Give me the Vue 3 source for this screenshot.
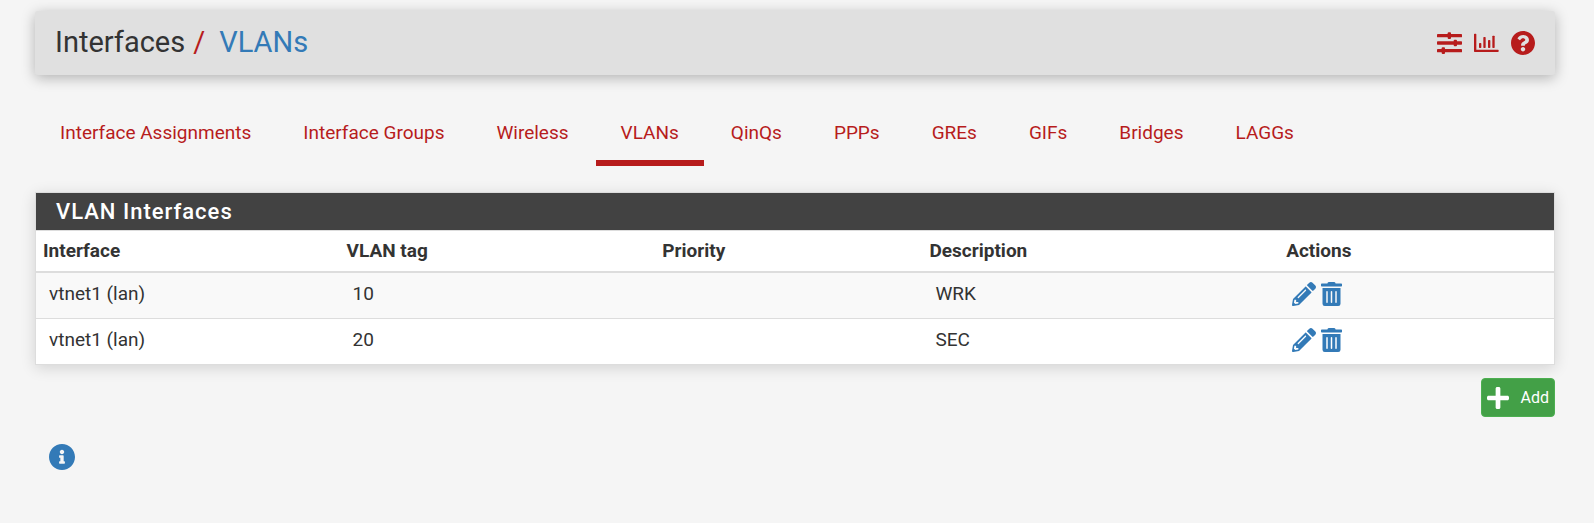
<script setup>
const tabs = [
  'Interface Assignments', 'Interface Groups', 'Wireless', 'VLANs', 'QinQs',
  'PPPs', 'GREs', 'GIFs', 'Bridges', 'LAGGs',
]
const activeTab = 'VLANs'
const vlans = [
  { iface: 'vtnet1 (lan)', tag: '10', priority: '', description: 'WRK' },
  { iface: 'vtnet1 (lan)', tag: '20', priority: '', description: 'SEC' },
]
</script>

<template>
  <div class="page">
    <header class="page-header">
      <h1>Interfaces<span class="slash">/</span><a href="#">VLANs</a></h1>
      <nav class="shortcuts" aria-label="Shortcuts">
        <a href="#" aria-label="Settings">
          <svg class="wide" viewBox="0 0 75 66">
            <rect y="6" width="75" height="10" rx="2" /><rect y="28" width="75" height="10" rx="2" /><rect y="51" width="75" height="10" rx="2" />
            <rect x="32" y="1" width="10" height="20" rx="3" /><rect x="50" y="23" width="10" height="20" rx="3" /><rect x="14" y="46" width="10" height="20" rx="3" />
          </svg>
        </a>
        <a href="#" aria-label="Monitoring">
          <svg class="wide" viewBox="0 0 75 66">
            <path d="M0 7q0-2 2-2h3q2 0 2 2v46h65q2 0 2 2v3q0 2-2 2H2q-2 0-2-2z" />
            <rect x="15" y="33" width="7" height="15" rx="2" /><rect x="28" y="15" width="7" height="33" rx="2" />
            <rect x="42" y="24" width="7" height="24" rx="2" /><rect x="55" y="11" width="7" height="37" rx="2" />
          </svg>
        </a>
        <a href="#" aria-label="Help">
          <svg class="round" viewBox="8 8 496 496"><path d="M504 256c0 136.997-111.043 248-248 248S8 392.997 8 256C8 119.083 119.043 8 256 8s248 111.083 248 248zM262.655 90c-54.497 0-89.255 22.957-116.549 63.758-3.536 5.286-2.353 12.415 2.715 16.258l34.699 26.31c5.205 3.947 12.621 3.008 16.665-2.122 17.864-22.658 30.113-35.797 57.303-35.797 20.429 0 45.698 13.148 45.698 32.958 0 14.976-12.363 22.667-32.534 33.976C247.128 238.528 216 254.941 216 296v4c0 6.627 5.373 12 12 12h56c6.627 0 12-5.373 12-12v-1.333c0-28.462 83.186-29.647 83.186-106.667 0-58.002-60.165-102-116.531-102zM256 338c-25.365 0-46 20.635-46 46 0 25.364 20.635 46 46 46s46-20.636 46-46c0-25.365-20.635-46-46-46z" /></svg>
        </a>
      </nav>
    </header>

    <nav class="tabs" aria-label="Interface sections">
      <a v-for="tab in tabs" :key="tab" href="#" :class="{ active: tab === activeTab }">{{ tab }}</a>
    </nav>

    <section class="panel">
      <h2>VLAN Interfaces</h2>
      <table>
        <colgroup>
          <col class="c-iface"><col class="c-tag"><col class="c-priority"><col class="c-description"><col>
        </colgroup>
        <thead>
          <tr><th>Interface</th><th>VLAN tag</th><th>Priority</th><th>Description</th><th>Actions</th></tr>
        </thead>
        <tbody>
          <tr v-for="vlan in vlans" :key="vlan.tag">
            <td>{{ vlan.iface }}</td>
            <td>{{ vlan.tag }}</td>
            <td>{{ vlan.priority }}</td>
            <td>{{ vlan.description }}</td>
            <td>
              <div class="actions">
                <a href="#" aria-label="Edit VLAN">
                  <svg class="pencil" viewBox="0 0 512 512"><path d="M497.9 142.1l-46.1 46.1c-4.7 4.7-12.3 4.7-17 0l-111-111c-4.7-4.7-4.7-12.3 0-17l46.1-46.1c18.7-18.7 49.1-18.7 67.9 0l60.1 60.1c18.8 18.7 18.8 49.1 0 67.9zM284.2 99.8L21.6 362.4.4 483.9c-2.9 16.4 11.4 30.6 27.8 27.8l121.5-21.3 262.6-262.6c4.7-4.7 4.7-12.3 0-17l-111-111c-4.8-4.7-12.4-4.7-17.1 0zM124.1 339.9c-5.5-5.5-5.5-14.3 0-19.8l154-154c5.5-5.5 14.3-5.5 19.8 0s5.5 14.3 0 19.8l-154 154c-5.5 5.5-14.3 5.5-19.8 0zM88 424h48v36.3l-64.5 11.3-31.1-31.1L51.7 376H88v48z" /></svg>
                </a>
                <a href="#" aria-label="Delete VLAN">
                  <svg class="trash" viewBox="0 0 448 512"><path d="M32 464a48 48 0 0 0 48 48h288a48 48 0 0 0 48-48V128H32zm272-256a16 16 0 0 1 32 0v224a16 16 0 0 1-32 0zm-96 0a16 16 0 0 1 32 0v224a16 16 0 0 1-32 0zm-96 0a16 16 0 0 1 32 0v224a16 16 0 0 1-32 0zM432 32H312l-9.4-18.7A24 24 0 0 0 281.1 0H166.8a23.72 23.72 0 0 0-21.4 13.3L136 32H16A16 16 0 0 0 0 48v32a16 16 0 0 0 16 16h416a16 16 0 0 0 16-16V48a16 16 0 0 0-16-16z" /></svg>
                </a>
              </div>
            </td>
          </tr>
        </tbody>
      </table>
    </section>

    <div class="toolbar">
      <a href="#" class="add">
        <svg viewBox="0 32 448 448"><path d="M416 208H272V64c0-17.67-14.33-32-32-32h-32c-17.67 0-32 14.33-32 32v144H32c-17.67 0-32 14.33-32 32v32c0 17.67 14.33 32 32 32h144v144c0 17.67 14.33 32 32 32h32c17.67 0 32-14.33 32-32V304h144c17.67 0 32-14.33 32-32v-32c0-17.67-14.33-32-32-32z" /></svg>
        Add
      </a>
    </div>

    <button type="button" class="info" aria-label="Show information">
      <svg viewBox="8 8 496 496"><path d="M256 8C119.043 8 8 119.083 8 256c0 136.997 111.043 248 248 248s248-111.003 248-248C504 119.083 392.957 8 256 8zm0 110c23.196 0 42 18.804 42 42s-18.804 42-42 42-42-18.804-42-42 18.804-42 42-42zm56 254c0 6.627-5.373 12-12 12h-88c-6.627 0-12-5.373-12-12v-24c0-6.627 5.373-12 12-12h12v-64h-12c-6.627 0-12-5.373-12-12v-24c0-6.627 5.373-12 12-12h64c6.627 0 12 5.373 12 12v100h12c6.627 0 12 5.373 12 12v24z" /></svg>
    </button>
  </div>
</template>

<style>
body {
  margin: 0;
  background: #f5f5f5;
}
</style>

<style scoped>
.page {
  padding: 11px 39px 52px 35px;
  font: 19px/26px Roboto, "Liberation Sans", sans-serif;
  color: #333;
}
a {
  text-decoration: none;
}
svg {
  display: block;
  fill: currentColor;
}
.page-header {
  display: flex;
  align-items: center;
  justify-content: space-between;
  padding: 0 20px;
  height: 64px;
  background: #e0e0e0;
  border-radius: 3px;
  box-shadow: 0 3px 14px rgba(0, 0, 0, 0.28);
}
h1 {
  margin: 0;
  padding-bottom: 2px;
  font-size: 29px;
  line-height: 36px;
  font-weight: 400;
}
h1 a {
  color: #337ab7;
}
.slash {
  margin: 0 14px 0 8px;
  color: #b71c1c;
}
.shortcuts {
  display: flex;
  align-items: center;
  gap: 12px;
}
.shortcuts a {
  color: #b71c1c;
}
.wide {
  width: 25px;
  height: 22px;
}
.round {
  width: 24px;
  height: 24px;
}
.tabs {
  display: flex;
  gap: 2px;
  margin-top: 33px;
}
.tabs a {
  padding: 12px 25px 14px;
  line-height: 26px;
  color: #b71c1c;
  border-bottom: 6px solid transparent;
}
.tabs a.active {
  border-bottom-color: #b71c1c;
}
.panel {
  margin-top: 26px;
  background: #fff;
  border: 1px solid #ddd;
  box-shadow: 0 3px 14px rgba(0, 0, 0, 0.14);
}
h2 {
  margin: 0;
  padding: 6px 20px 5px;
  background: #424242;
  color: #fff;
  font-size: 22px;
  line-height: 26px;
  font-weight: 500;
  letter-spacing: 1px;
}
table {
  width: 100%;
  table-layout: fixed;
  border-collapse: separate;
  border-spacing: 0;
  border-top: 1px solid #ddd;
}
.c-iface { width: 20%; }
.c-tag { width: 20.8%; }
.c-priority { width: 17.6%; }
.c-description { width: 23.5%; }
th {
  padding: 7px;
  text-align: left;
  font-weight: 700;
  border-bottom: 2px solid #ddd;
}
td {
  padding: 8px 13px 11px;
}
tbody tr:nth-child(odd) {
  background: #f9f9f9;
}
tbody tr + tr td {
  border-top: 1px solid #ddd;
}
.actions {
  display: flex;
  align-items: center;
  gap: 5px;
}
.actions a {
  color: #337ab7;
}
.pencil {
  width: 24px;
  height: 24px;
}
.trash {
  width: 21px;
  height: 24px;
}
.toolbar {
  display: flex;
  justify-content: flex-end;
  margin-top: 13px;
}
.add {
  display: flex;
  align-items: center;
  gap: 12px;
  padding: 6px 5px;
  border: 1px solid #4caf50;
  border-radius: 4px;
  background: #43a047;
  color: #fff;
  font-size: 16px;
  line-height: 25px;
}
.add svg {
  width: 22px;
  height: 22px;
}
.info {
  display: block;
  margin: 27px 0 0 14px;
  padding: 0;
  border: 0;
  background: none;
  color: #337ab7;
}
.info svg {
  width: 26px;
  height: 26px;
}
</style>
